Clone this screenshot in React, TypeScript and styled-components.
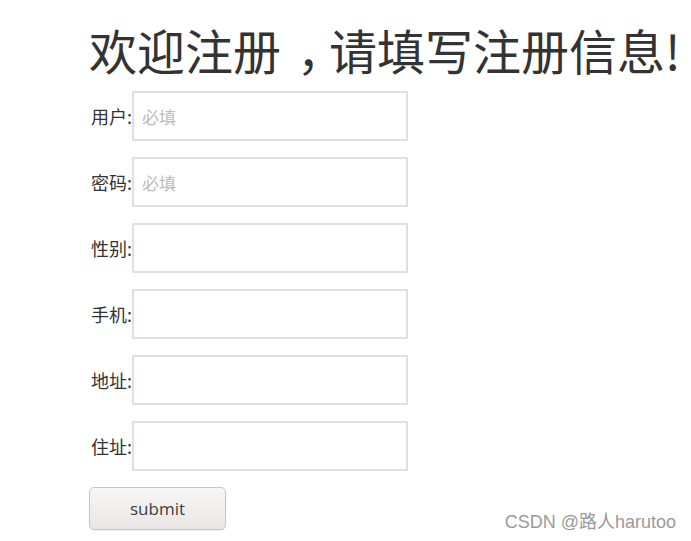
import React from "react";
import styled, { createGlobalStyle } from "styled-components";

const GlobalStyle = createGlobalStyle`
  html, body {
    margin: 0;
    padding: 0;
    background: #fff;
  }
  body {
    font-family: "Noto Sans CJK SC", "Noto Sans", sans-serif;
    color: #333;
  }
`;

const Page = styled.div`
  position: relative;
  width: 691px;
  height: 541px;
  overflow: hidden;
  padding: 17px 0 0 89px;
  box-sizing: border-box;
`;

const Title = styled.h1`
  margin: 0 0 10px 0;
  font-size: 48px;
  line-height: 64px;
  font-weight: 400;
  color: #333;
  white-space: nowrap;
`;

// the reference draws the full-width comma in the middle of its cell:
// half-width glyph, padded back to a full cell
const Comma = styled.span`
  font-feature-settings: "halt";
  padding: 0 0.17em 0 0.33em;
`;

const Form = styled.form`
  display: flex;
  flex-direction: column;
  gap: 16px;
`;

const Row = styled.div`
  display: flex;
  align-items: center;
`;

const Label = styled.label`
  font-size: 18px;
  color: #333;
  width: 43px;
  text-align: right;
  white-space: nowrap;
`;

const Input = styled.input`
  width: 276px;
  height: 50px;
  box-sizing: border-box;
  border: 2px solid #e0e0e0;
  padding: 0 8px;
  font-size: 17px;
  font-family: "Noto Sans CJK SC", sans-serif;
  color: #333;
  outline: none;
  &::placeholder {
    color: #bbb;
  }
`;

const Submit = styled.button`
  width: 137px;
  height: 43px;
  border: 1px solid #c8c6c2;
  border-radius: 5px;
  background: linear-gradient(#f7f6f5, #e9e7e5);
  font-family: "Open Sans", "Noto Sans", sans-serif;
  font-size: 17px;
  color: #3c3c3c;
  cursor: pointer;
  box-shadow: 0 1px 1px rgba(0, 0, 0, 0.08);
`;

const Watermark = styled.div`
  position: absolute;
  right: 15px;
  bottom: 8px;
  font-family: "Liberation Sans", "Noto Sans CJK SC", sans-serif;
  font-size: 18px;
  color: #9a9a9a;
`;

const fields = [
  { label: "用户:", placeholder: "必填" },
  { label: "密码:", placeholder: "必填", type: "password" },
  { label: "性别:" },
  { label: "手机:" },
  { label: "地址:" },
  { label: "住址:" },
];

const App: React.FC = () => {
  return (
    <Page>
      <GlobalStyle />
      <Title>
        欢迎注册<Comma>，</Comma>请填写注册信息!
      </Title>
      <Form onSubmit={(e) => e.preventDefault()}>
        {fields.map((f) => (
          <Row key={f.label}>
            <Label>{f.label}</Label>
            <Input type="text" placeholder={f.placeholder} />
          </Row>
        ))}
        <Row>
          <Submit type="submit">submit</Submit>
        </Row>
      </Form>
      <Watermark>CSDN @路人harutoo</Watermark>
    </Page>
  );
};

export default App;
